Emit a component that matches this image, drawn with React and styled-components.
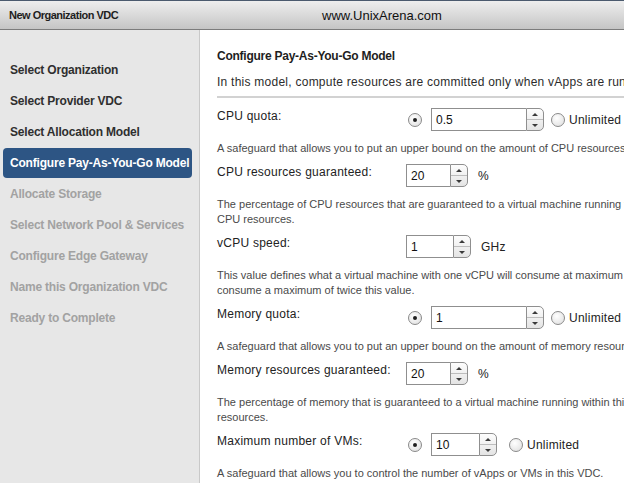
import React from "react";
import styled, { createGlobalStyle, css } from "styled-components";

const GlobalStyle = createGlobalStyle`
  html, body {
    margin: 0;
    height: 100%;
    overflow: hidden;
  }
  body {
    font-family: "Liberation Sans", Arial, sans-serif;
    background: #fff;
  }
  #root {
    height: 100%;
  }
`;

const Window = styled.div`
  height: 100%;
  display: flex;
  flex-direction: column;
`;

const TitleBar = styled.div`
  flex-shrink: 0;
  height: 28px;
  border-top: 1px solid #4b5a6e;
  border-bottom: 1px solid #7c7c7c;
  background: linear-gradient(#eeeeee, #c5c5c5);
  display: grid;
  grid-template-columns: 313px auto;
  align-items: center;
  padding-left: 9px;
`;

const WindowTitle = styled.div`
  font-size: 11px;
  font-weight: bold;
  letter-spacing: -0.5px;
  color: #1e1e1e;
`;

const Watermark = styled.div`
  font-size: 13px;
  color: #111;
`;

const Body = styled.div`
  flex: 1;
  min-height: 0;
  display: flex;
`;

const Sidebar = styled.nav`
  width: 200px;
  flex-shrink: 0;
  background: #e7e7e7;
  border-right: 1px solid #c9c9c9;
  padding: 25px 7px 0 3px;
  box-sizing: border-box;
  display: flex;
  flex-direction: column;
  gap: 1px;
`;

const Step = styled.div`
  height: 30px;
  line-height: 30px;
  padding-left: 7px;
  border-radius: 4px;
  font-size: 12px;
  font-weight: bold;
  letter-spacing: -0.2px;
  white-space: nowrap;
  color: ${(p) => (p.$state === "done" ? "#2f2f2f" : "#a2a2a2")};
  ${(p) =>
    p.$state === "active" &&
    css`
      background: #2d5584;
      color: #fff;
    `}
`;

const Content = styled.main`
  flex: 1;
  min-width: 0;
  overflow: hidden;
  padding: 18px 0 0 17px;
`;

const Heading = styled.h2`
  margin: 0 0 10px;
  font-size: 12px;
  line-height: 16px;
  font-weight: bold;
  letter-spacing: -0.25px;
  color: #1e1e1e;
`;

const Intro = styled.p`
  margin: 0 0 6px;
  font-size: 12px;
  line-height: 16px;
  letter-spacing: 0.25px;
  color: #2c2c2c;
  white-space: nowrap;
`;

const Divider = styled.hr`
  margin: 0 0 10px;
  border: none;
  border-top: 2px solid #d2d2d2;
`;

const Row = styled.div`
  display: flex;
  align-items: flex-start;
`;

const Label = styled.div`
  width: 189px;
  flex-shrink: 0;
  font-size: 12px;
  line-height: 16px;
  letter-spacing: 0.25px;
  color: #222;
  white-space: nowrap;
`;

const Controls = styled.div`
  display: flex;
  align-items: center;
  height: 23px;
`;

const Radio = styled.span`
  position: relative;
  flex-shrink: 0;
  width: 12px;
  height: 12px;
  border-radius: 50%;
  border: 1px solid #8a8a8a;
  background: radial-gradient(circle at 40% 35%, #ffffff, #dcdcdc);
  margin: 0 ${(p) => p.$right ?? 0}px 0 ${(p) => p.$left ?? 0}px;
  ${(p) =>
    p.$checked &&
    css`
      &::after {
        content: "";
        position: absolute;
        left: 4px;
        top: 4px;
        width: 4px;
        height: 4px;
        border-radius: 50%;
        background: #1f1f1f;
      }
    `}
`;

const SpinBox = styled.div`
  display: flex;
  width: ${(p) => p.$w}px;
  height: 23px;
  box-sizing: border-box;
`;

const SpinValue = styled.div`
  flex: 1;
  display: flex;
  align-items: center;
  padding-left: 4px;
  border: 1px solid #8f8f8f;
  border-right: none;
  background: #fff;
  font-size: 12px;
  color: #111;
`;

const SpinButtons = styled.div`
  width: 16px;
  display: flex;
  flex-direction: column;
  border: 1px solid #8f8f8f;
  border-radius: 0 5px 5px 0;
  background: linear-gradient(#fdfdfd, #e4e4e4);
  overflow: hidden;
`;

const SpinHalf = styled.div`
  flex: 1;
  display: flex;
  align-items: center;
  justify-content: center;
  & + & {
    border-top: 1px solid #bdbdbd;
  }
`;

const Arrow = styled.span`
  width: 0;
  height: 0;
  border-left: 3px solid transparent;
  border-right: 3px solid transparent;
  ${(p) =>
    p.$up
      ? css`
          border-bottom: 3px solid #3a3a3a;
        `
      : css`
          border-top: 3px solid #3a3a3a;
        `}
`;

const Unit = styled.span`
  margin-left: 10px;
  font-size: 12px;
  letter-spacing: 0.25px;
  color: #222;
`;

const Option = styled.span`
  margin-left: 4px;
  font-size: 12px;
  letter-spacing: 0.25px;
  color: #222;
  white-space: nowrap;
`;

const Desc = styled.p`
  margin: 10px 0 8px;
  font-size: 11px;
  line-height: 15px;
  color: #4a4a4a;
  white-space: nowrap;
`;

const Spinner = ({ value, width }) => (
  <SpinBox $w={width}>
    <SpinValue>{value}</SpinValue>
    <SpinButtons>
      <SpinHalf>
        <Arrow $up />
      </SpinHalf>
      <SpinHalf>
        <Arrow />
      </SpinHalf>
    </SpinButtons>
  </SpinBox>
);

const steps = [
  ["Select Organization", "done"],
  ["Select Provider VDC", "done"],
  ["Select Allocation Model", "done"],
  ["Configure Pay-As-You-Go Model", "active"],
  ["Allocate Storage", "todo"],
  ["Select Network Pool & Services", "todo"],
  ["Configure Edge Gateway", "todo"],
  ["Name this Organization VDC", "todo"],
  ["Ready to Complete", "todo"],
];

const fields = [
  {
    label: "CPU quota:",
    value: "0.5",
    width: 113,
    quota: true,
    gap: 7,
    desc: [
      "A safeguard that allows you to put an upper bound on the amount of CPU resources being used by this VDC.",
    ],
  },
  {
    label: "CPU resources guaranteed:",
    value: "20",
    width: 62,
    unit: "%",
    desc: [
      "The percentage of CPU resources that are guaranteed to a virtual machine running within this VDC. This option lets you overcommit",
      "CPU resources.",
    ],
  },
  {
    label: "vCPU speed:",
    value: "1",
    width: 65,
    unit: "GHz",
    desc: [
      "This value defines what a virtual machine with one vCPU will consume at maximum when running. A virtual machine with two vCPUs would",
      "consume a maximum of twice this value.",
    ],
  },
  {
    label: "Memory quota:",
    value: "1",
    width: 113,
    quota: true,
    gap: 7,
    desc: [
      "A safeguard that allows you to put an upper bound on the amount of memory resources being used by this VDC.",
    ],
  },
  {
    label: "Memory resources guaranteed:",
    value: "20",
    width: 62,
    unit: "%",
    desc: [
      "The percentage of memory that is guaranteed to a virtual machine running within this VDC. This option lets you overcommit memory",
      "resources.",
    ],
  },
  {
    label: "Maximum number of VMs:",
    value: "10",
    width: 66,
    quota: true,
    gap: 12,
    desc: ["A safeguard that allows you to control the number of vApps or VMs in this VDC."],
  },
];

const App = () => (
  <Window>
    <GlobalStyle />
    <TitleBar>
      <WindowTitle>New Organization VDC</WindowTitle>
      <Watermark>www.UnixArena.com</Watermark>
    </TitleBar>
    <Body>
      <Sidebar>
        {steps.map(([name, state]) => (
          <Step key={name} $state={state}>
            {name}
          </Step>
        ))}
      </Sidebar>
      <Content>
        <Heading>Configure Pay-As-You-Go Model</Heading>
        <Intro>
          In this model, compute resources are committed only when vApps are running in this organization VDC.
        </Intro>
        <Divider />
        {fields.map((f) => (
          <div key={f.label}>
            <Row>
              <Label>{f.label}</Label>
              <Controls>
                {f.quota && <Radio $checked $left={2} $right={9} />}
                <Spinner value={f.value} width={f.width} />
                {f.unit && <Unit>{f.unit}</Unit>}
                {f.quota && (
                  <>
                    <Radio $left={f.gap} />
                    <Option>Unlimited</Option>
                  </>
                )}
              </Controls>
            </Row>
            <Desc>
              {f.desc.map((line, i) => (
                <React.Fragment key={i}>
                  {i > 0 && <br />}
                  {line}
                </React.Fragment>
              ))}
            </Desc>
          </div>
        ))}
      </Content>
    </Body>
  </Window>
);

export default App;
